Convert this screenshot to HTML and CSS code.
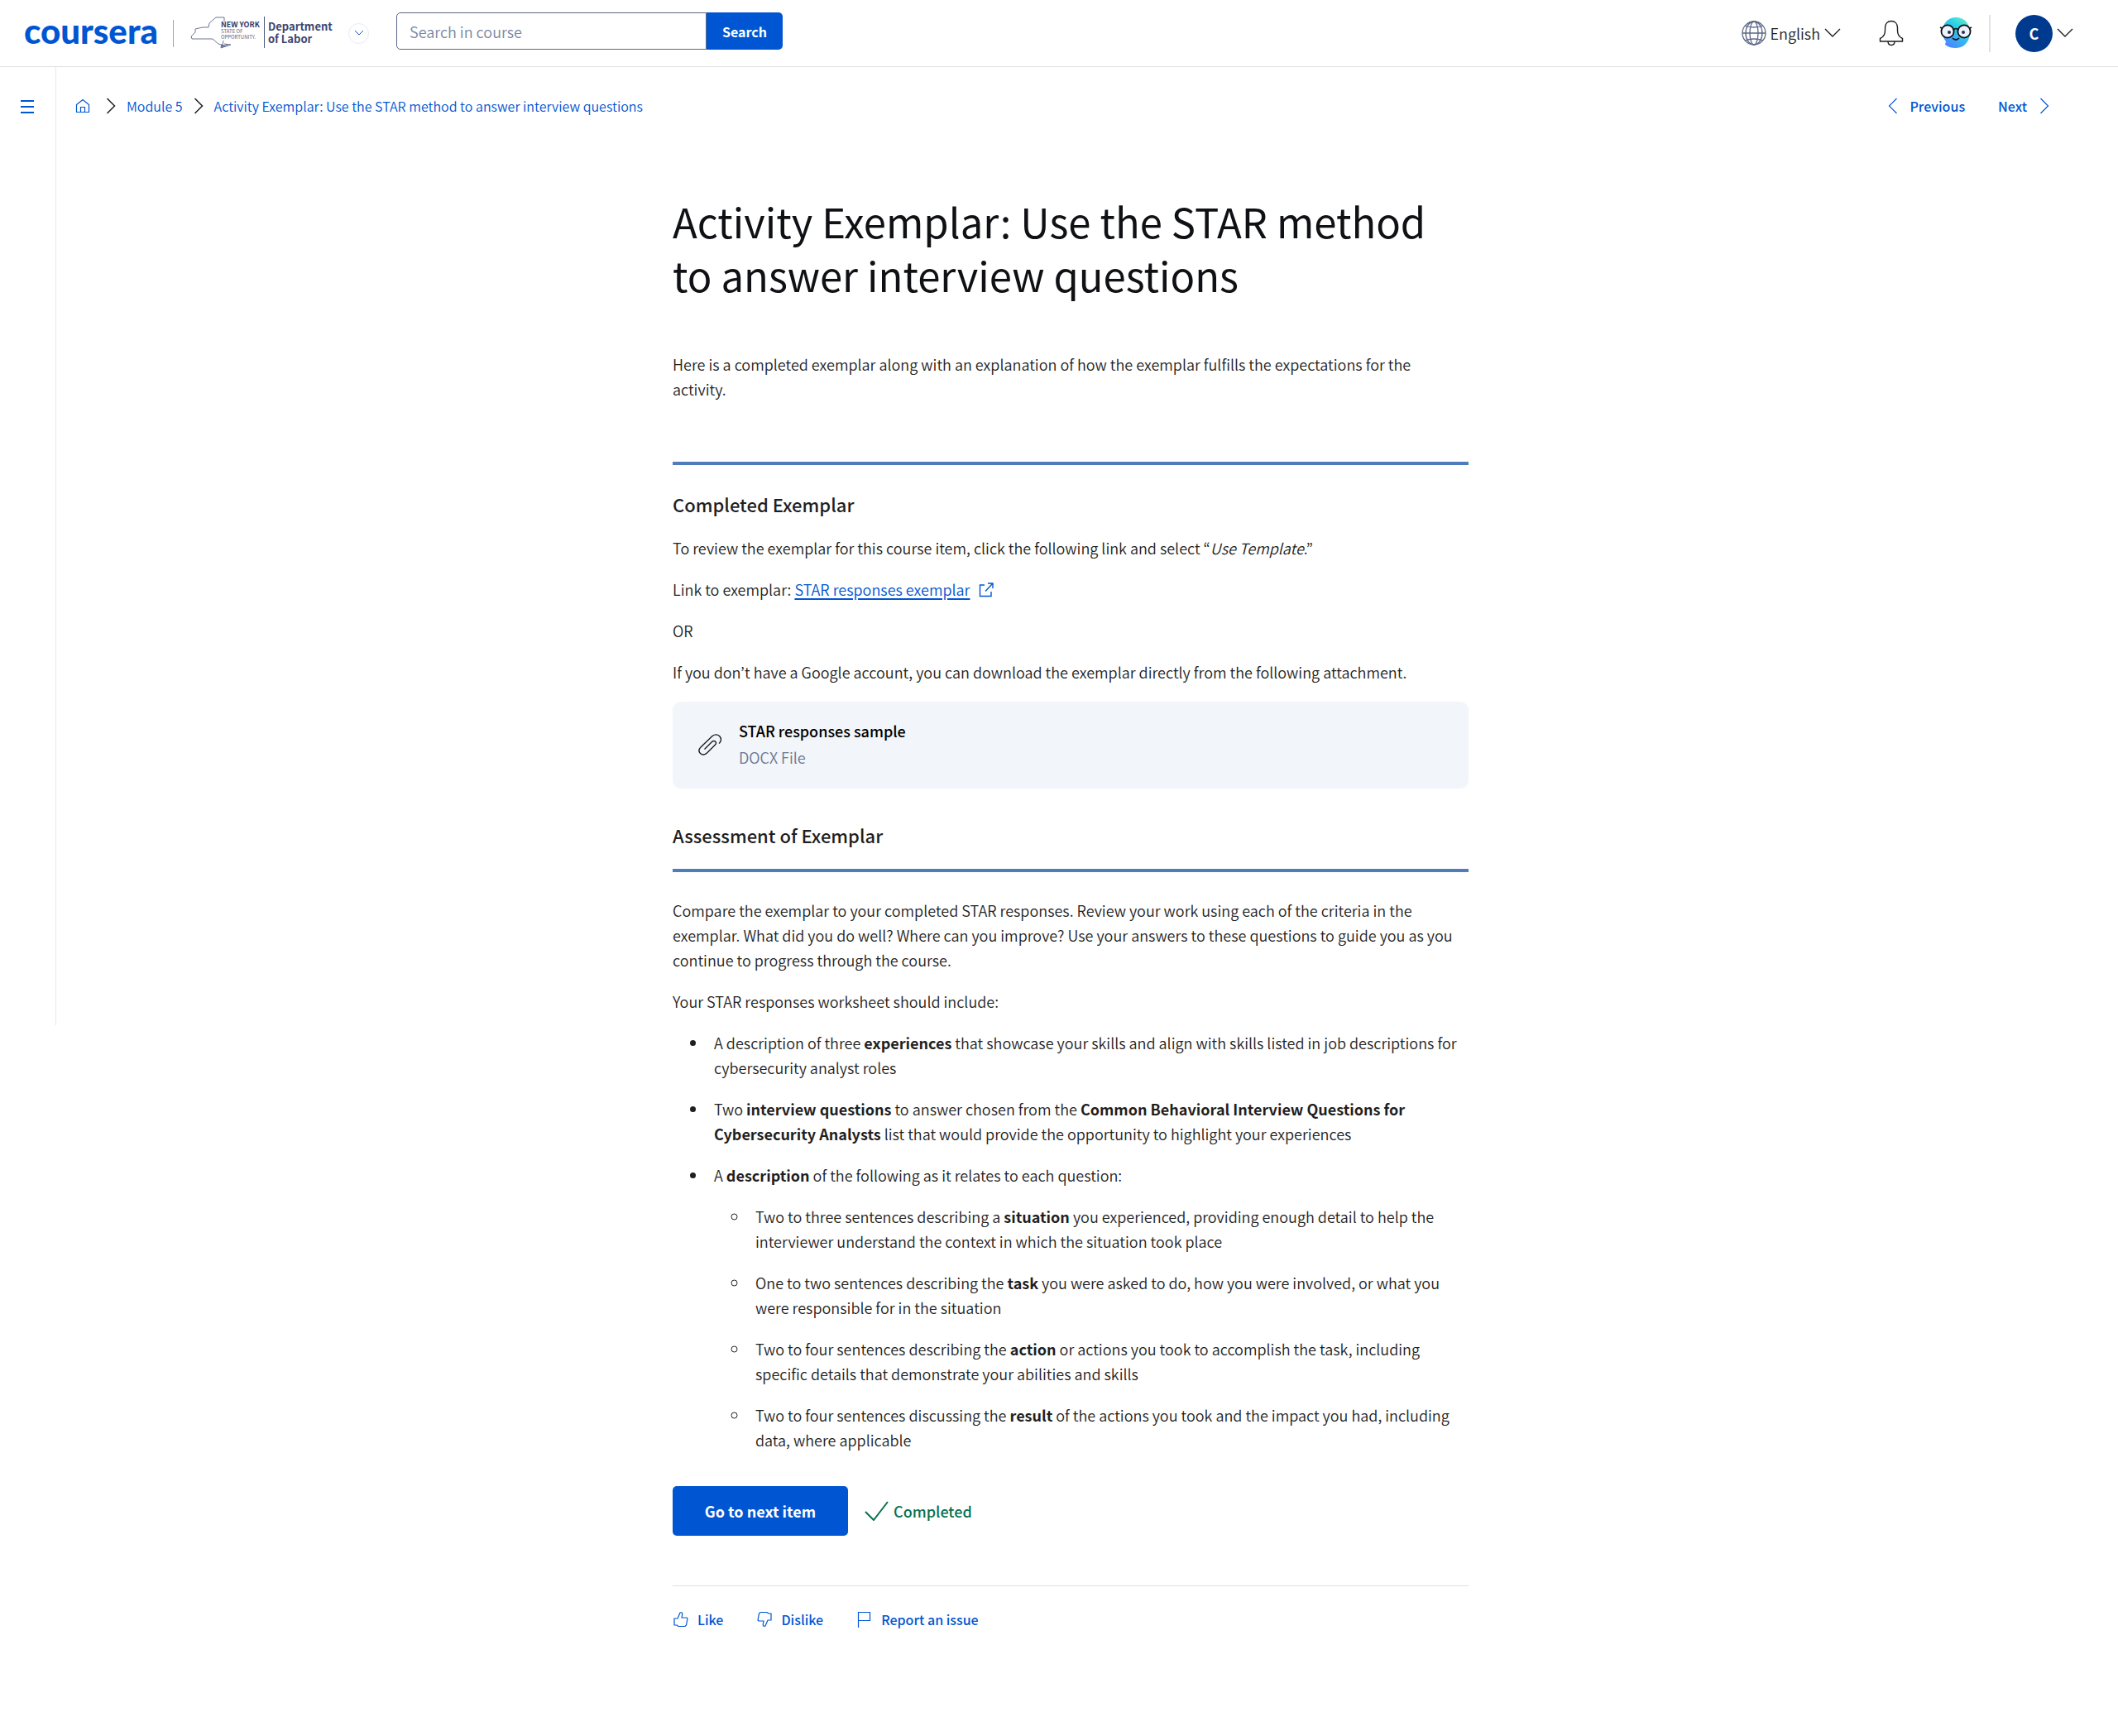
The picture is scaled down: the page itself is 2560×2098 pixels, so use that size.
FILE: index.html
```html
<!DOCTYPE html>
<html lang="en">
<head>
<meta charset="utf-8">
<meta name="viewport" content="width=device-width, initial-scale=1">
<title>Activity Exemplar: Use the STAR method to answer interview questions</title>
<link rel="stylesheet" href="styles.css">
</head>
<body>
<header class="topbar">
  <a class="wordmark" href="#">coursera</a>
  <span class="brand-divider"></span>
  <a class="partner" href="#" aria-label="New York State Department of Labor">
    <svg width="178" height="42" viewBox="0 0 178 42">
      <path d="M1 25 L6 20 L6 16 L15 14 L22 14 L23 9 L31 2 H41 V7 M1 25 L2 28 H27 L34 34 L39 36 L40 30 M38 34 L37 39 L49 35 L41 34" fill="none" stroke="#6d7596" stroke-width="1"/>
      <path d="M37 36l10-1-9 3z" fill="#4a5480"/>
      <text class="logo-state" x="37" y="14">NEW YORK</text>
      <text class="logo-motto" x="37" y="21">STATE OF</text>
      <text class="logo-motto" x="37" y="28">OPPORTUNITY.</text>
      <path d="M89.500 1v38" stroke="#4a5480" stroke-width="1"/>
      <text class="logo-dept" x="94" y="18">Department</text>
      <text class="logo-dept" x="94" y="33">of Labor</text>
    </svg>
  </a>
  <button class="partner-toggle" type="button" aria-label="Switch program">
    <svg width="12" height="8" viewBox="0 0 12 8"><path d="M1 1l5 5 5-5" fill="none" stroke="#0056d2"/></svg>
  </button>
  <form class="search" role="search">
    <input class="search-input" type="search" placeholder="Search in course" aria-label="Search in course">
    <button class="search-button" type="button">Search</button>
  </form>
  <nav class="tools" aria-label="Account">
    <button class="language" type="button">
      <svg width="30" height="30" viewBox="0 0 30 30" fill="none" stroke="#5b6785" stroke-width="1.300"><circle cx="15" cy="15" r="14"/><ellipse cx="15" cy="15" rx="10" ry="14"/><ellipse cx="15" cy="15" rx="5" ry="14"/><path d="M1 15h28M4 6q11 4 22 0M4 24q11-4 22 0"/></svg>
      <span>English</span>
      <svg width="20" height="12" viewBox="0 0 20 12"><path d="M1 1l9 9 9-9" fill="none" stroke="#1f1f1f" stroke-width="1.400"/></svg>
    </button>
    <button class="bell" type="button" aria-label="Notifications">
      <svg width="30" height="32" viewBox="0 0 30 32" fill="none" stroke="#1f1f1f" stroke-width="1.400"><path d="M1.500 26v-3.500C5 21 7.500 18 7.500 13V9.500C7.500 4.500 10.500 1.500 15 1.500s7.500 3 7.500 8V13c0 5 2.500 8 6 9.500V26zM11 26c0 6 8 6 8 0"/></svg>
    </button>
    <button class="coach" type="button" aria-label="Coach">
      <svg width="40" height="38" viewBox="0 0 40 38">
        <defs><linearGradient id="coach-body" x1="1" y1="0" x2="0.300" y2="1"><stop offset="0" stop-color="#7df0c0"/><stop offset="0.400" stop-color="#2bd3e6"/><stop offset="1" stop-color="#4a87ff"/></linearGradient></defs>
        <path d="M20 0C31 0 37 8 37 18S31 37 20 37C15 37 11 36 7 33L8 29C5 26 4 22 4 17 4 7 11 0 20 0z" fill="url(#coach-body)"/>
        <g fill="#eef2ff" stroke="#101010" stroke-width="1.800"><circle cx="10" cy="17" r="7.600"/><circle cx="30" cy="17" r="7.600"/></g>
        <path d="M17.500 15q2.500-3 5 0M3 13l-2-1M37 13l2-1M16 25q4 4 8 0" fill="none" stroke="#101010" stroke-width="1.700"/>
        <circle cx="12" cy="18" r="2" fill="#26304d"/><circle cx="29" cy="18" r="2" fill="#26304d"/>
      </svg>
    </button>
    <span class="tools-divider"></span>
    <button class="account" type="button">
      <span class="avatar">C</span>
      <svg width="20" height="12" viewBox="0 0 20 12"><path d="M1 1l9 9 9-9" fill="none" stroke="#1f1f1f" stroke-width="1.400"/></svg>
    </button>
  </nav>
</header>

<div class="shell">
  <aside class="rail">
    <button class="menu" type="button" aria-label="Open course menu">
      <svg width="16" height="16" viewBox="0 0 16 16"><path d="M0 1h16M0 8h16M0 15h16" stroke="#0056d2" stroke-width="2"/></svg>
    </button>
  </aside>
  <div class="page">
    <div class="crumb-row">
      <nav class="crumbs" aria-label="Breadcrumb">
        <a href="#" class="home" aria-label="Home"><svg width="18" height="18" viewBox="0 0 18 18" fill="none" stroke="#0056d2" stroke-width="1.200"><path d="M1.500 7.500L9 1.500l7.500 6v9h-15zM6.500 16.500v-6h5v6"/></svg></a>
        <svg width="12" height="20" viewBox="0 0 12 20"><path d="M1.500 1l9 9-9 9" fill="none" stroke="#1f1f1f" stroke-width="1.500"/></svg>
        <a href="#">Module 5</a>
        <svg width="12" height="20" viewBox="0 0 12 20"><path d="M1.500 1l9 9-9 9" fill="none" stroke="#1f1f1f" stroke-width="1.500"/></svg>
        <a href="#">Activity Exemplar: Use the STAR method to answer interview questions</a>
      </nav>
      <nav class="pager" aria-label="Course items">
        <a href="#"><svg width="12" height="20" viewBox="0 0 12 20"><path d="M10.500 1l-9 9 9 9" fill="none" stroke="#0056d2" stroke-width="1.200"/></svg>Previous</a>
        <a href="#">Next<svg width="12" height="20" viewBox="0 0 12 20"><path d="M1.500 1l9 9-9 9" fill="none" stroke="#0056d2" stroke-width="1.200"/></svg></a>
      </nav>
    </div>

    <main class="article">
      <h1>Activity Exemplar: Use the STAR method to answer interview questions</h1>
      <p class="intro">Here is a completed exemplar along with an explanation of how the exemplar fulfills the expectations for the activity.</p>
      <hr class="rule">
      <h2 class="completed-heading">Completed Exemplar</h2>
      <p>To review the exemplar for this course item, click the following link and select “<em>Use Template</em>.”</p>
      <p>Link to exemplar: <a class="ext" href="#">STAR responses exemplar</a><svg class="ext-icon" width="18" height="18" viewBox="0 0 18 18" fill="none" stroke="#0056d2" stroke-width="1.400"><path d="M7 3H1.500v13.500H15V11M8 10.500L17 1M11 1h6v6"/></svg></p>
      <p>OR</p>
      <p>If you don’t have a Google account, you can download the exemplar directly from the following attachment.</p>
      <a class="attachment" href="#">
        <svg width="30" height="30" viewBox="0 0 30 30" fill="none" stroke="#1f1f1f" stroke-width="1.400"><path d="M26 14.500l1-1c2-2.500 1.500-5.500 0-7.500-2-2.500-6-3-9-.5L4 19c-2.500 2.500-2.500 5.500-.5 7.500s5.500 2 8-.5L21.500 16c2-2 .5-3.500 0-4s-2.500-1-4 .5L8.500 21.500"/></svg>
        <span class="attachment-text"><strong>STAR responses sample</strong><span class="file-type">DOCX File</span></span>
      </a>
      <h2 class="assessment-heading">Assessment of Exemplar</h2>
      <hr class="rule">
      <p class="compare">Compare the exemplar to your completed STAR responses. Review your work using each of the criteria in the exemplar. What did you do well? Where can you improve? Use your answers to these questions to guide you as you continue to progress through the course.</p>
      <p>Your STAR responses worksheet should include:</p>
      <ul>
        <li>A description of three <strong>experiences</strong> that showcase your skills and align with skills listed in job descriptions for cybersecurity analyst roles</li>
        <li>Two <strong>interview questions</strong> to answer chosen from the <strong>Common Behavioral Interview Questions for Cybersecurity Analysts</strong> list that would provide the opportunity to highlight your experiences</li>
        <li>A <strong>description</strong> of the following as it relates to each question:
          <ul>
            <li>Two to three sentences describing a <strong>situation</strong> you experienced, providing enough detail to help the interviewer understand the context in which the situation took place</li>
            <li>One to two sentences describing the <strong>task</strong> you were asked to do, how you were involved, or what you were responsible for in the situation</li>
            <li>Two to four sentences describing the <strong>action</strong> or actions you took to accomplish the task, including specific details that demonstrate your abilities and skills</li>
            <li>Two to four sentences discussing the <strong>result</strong> of the actions you took and the impact you had, including data, where applicable</li>
          </ul>
        </li>
      </ul>
      <div class="finish">
        <button class="next-item" type="button">Go to next item</button>
        <span class="done"><svg width="30" height="24" viewBox="0 0 30 24"><path d="M1 13l10 10L28 1" fill="none" stroke="#087051" stroke-width="2"/></svg>Completed</span>
      </div>
      <footer class="feedback">
        <button type="button"><svg width="20" height="20" viewBox="0 0 20 20" fill="none" stroke="#0056d2" stroke-width="1.200"><path d="M2 9h4l3-7c3-1 3 1 2.500 3L11 8h6l1 1-1.500 8-1.500 1.500H7L5 17H2z"/></svg>Like</button>
        <button type="button"><svg width="20" height="20" viewBox="0 0 20 20" fill="none" stroke="#0056d2" stroke-width="1.200"><path d="M18 11h-4l-3 7c-3 1-3-1-2.500-3L9 12H3l-1-1 1.500-8L5 1.500h8L15 3h3z"/></svg>Dislike</button>
        <button type="button"><svg width="20" height="20" viewBox="0 0 20 20" fill="none" stroke="#0056d2" stroke-width="1.200"><path d="M2.500 20V1.500h14v10h-14"/></svg>Report an issue</button>
      </footer>
    </main>
  </div>
</div>
</body>
</html>
```
FILE: styles.css
```css
* { box-sizing: border-box; }

body {
  margin: 0;
  background: #fff;
  color: #1f1f1f;
  font-family: "Noto Sans CJK KR", "Noto Sans", sans-serif;
  font-size: 18px;
  font-weight: 350;
  line-height: 30px;
}

svg { display: block; flex: none; }
a { color: #0056d2; text-decoration: none; }
button {
  padding: 0;
  border: 0;
  background: none;
  color: inherit;
  font: inherit;
  cursor: pointer;
}

/* Top bar */
.topbar {
  display: flex;
  align-items: center;
  height: 81px;
  padding: 0 54px 0 29px;
  border-bottom: 1px solid #e1e1e1;
}
.wordmark {
  width: 161px;
  padding-bottom: 6px;
  font: 900 42px/40px Lato, sans-serif;
}
.brand-divider { width: 1px; height: 33px; margin: 0 20px 0 19px; background: #9aa3b8; }
.partner { margin-right: 13px; }
.logo-state { font: 700 9px "Noto Sans CJK KR", sans-serif; fill: #2f3a6a; }
.logo-motto { font: 400 6px "Noto Sans CJK KR", sans-serif; fill: #59628a; }
.logo-dept { font: 700 13px "Noto Sans CJK KR", sans-serif; fill: #3c4672; }
.partner-toggle {
  display: grid;
  place-items: center;
  width: 25px;
  height: 25px;
  border: 1px solid #e3ebf8;
  border-radius: 50%;
}
.search { display: flex; height: 45px; margin: 0 auto 5px 33px; }
.search-input {
  width: 375px;
  padding: 0 15px;
  border: 1px solid #5b6785;
  border-radius: 5px 0 0 5px;
  font: inherit;
  background: #fff;
}
.search-input::placeholder { color: #7a86a3; opacity: 1; }
.search-button {
  width: 92px;
  border-radius: 0 5px 5px 0;
  background: #0056d2;
  color: #fff;
  font-size: 16px;
  font-weight: 700;
}
.tools { display: flex; align-items: center; }
.language { display: flex; align-items: center; gap: 5px; }
.bell { margin-left: 46px; }
.coach { margin-left: 43px; }
.tools-divider { width: 2px; height: 45px; margin: 0 30px 0 20px; background: #e1e1e1; }
.account { display: flex; align-items: center; gap: 5px; }
.avatar {
  width: 45px;
  height: 45px;
  border-radius: 50%;
  background: #003a8f;
  color: #fff;
  font-weight: 700;
  line-height: 45px;
}

/* Shell */
.shell { display: flex; align-items: flex-start; }
.rail {
  flex: none;
  width: 68px;
  height: 1158px;
  padding: 40px 0 0 25px;
  border-right: 1px solid #e8e8f0;
}
.menu { display: block; }
.page { flex: 1; padding-right: 40px; }
.crumb-row {
  display: flex;
  justify-content: space-between;
  padding: 32px 43px 0 23px;
  font-size: 16px;
}
.crumbs, .pager, .pager a { display: flex; align-items: center; }
.crumbs { gap: 13px; }
.home { margin-right: 6px; }
.pager { gap: 40px; font-weight: 500; }
.pager a { gap: 15px; }

/* Article */
.article { max-width: 962px; margin: 0 auto; padding: 91px 0 126px; }
h1 { margin: 0 0 61px; color: #0f1114; font-size: 49px; font-weight: 400; line-height: 65px; }
h2 { margin: 0; font-size: 22px; font-weight: 500; line-height: 30px; }
p { margin: 0 0 20px; }
.intro { margin-bottom: 73px; padding-right: 20px; }
.rule { height: 4px; margin: 0; border: 0; background: #4f7cba; }
.completed-heading { margin: 32px 0 23px; }
.ext { text-decoration: underline; text-decoration-thickness: 2px; text-underline-offset: 3px; }
.ext-icon { display: inline-block; margin-left: 11px; vertical-align: -2px; }
.attachment {
  display: flex;
  align-items: center;
  gap: 20px;
  height: 105px;
  margin-top: 21px;
  padding: 0 30px 4px;
  border-radius: 10px;
  background: #f2f5fa;
  color: #000;
}
.attachment-text { display: grid; gap: 2px; }
.attachment strong { font-weight: 500; }
.file-type { color: #6a7692; }
.assessment-heading { margin: 41px 0 26px; }
.compare { margin-top: 31px; }
ul { margin: 0; padding-left: 42px; }
li { margin-bottom: 20px; padding-left: 8px; }
li ul { margin-top: 20px; }
li:last-child { margin-bottom: 0; }
.finish { display: flex; align-items: center; gap: 20px; margin: 41px 0 60px; }
.next-item {
  width: 212px;
  height: 60px;
  border-radius: 5px;
  background: #0056d2;
  color: #fff;
  font-weight: 700;
}
.done { display: flex; align-items: center; gap: 5px; color: #087051; font-weight: 500; }
.feedback {
  display: flex;
  gap: 40px;
  padding-top: 25px;
  border-top: 1px solid #e1e1e1;
  color: #0056d2;
  font-size: 16px;
  font-weight: 500;
}
.feedback button { display: flex; align-items: center; gap: 10px; }
```
